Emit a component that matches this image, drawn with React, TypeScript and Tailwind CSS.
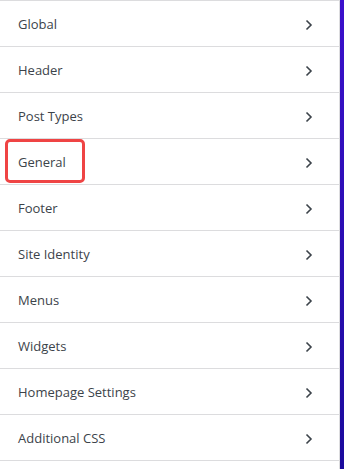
import React from "react";

const items = [
  "Global",
  "Header",
  "Post Types",
  "General",
  "Footer",
  "Site Identity",
  "Menus",
  "Widgets",
  "Homepage Settings",
  "Additional CSS",
];

function Chevron() {
  return (
    <svg width="10" height="12" viewBox="0 0 10 12" fill="none">
      <path d="M2.5 1.5 L7 6 L2.5 10.5" stroke="#3c434a" strokeWidth="1.6" />
    </svg>
  );
}

export default function App() {
  return (
    <div className="flex h-[469px] w-[344px] bg-white" style={{ fontFamily: '"Open Sans", "Noto Sans", sans-serif' }}>
      <div className="flex w-[340px] flex-col border-r border-[#dcdcde]">
        <div className="border-t border-[#dcdcde]" />
        {items.map((label) => (
          <div key={label} className="relative flex h-[46px] items-center justify-between border-b border-[#dcdcde] pl-[18px] pr-[25px] pt-[2px]">
            <span className="text-[13px] font-medium text-[#3c434a]">{label}</span>
            <Chevron />
            {label === "General" && (
              <div className="absolute left-[5px] top-0 h-[44px] w-[80px] rounded-[5px] border-[3px] border-[#ef4444]" />
            )}
          </div>
        ))}
      </div>
      <div className="h-full w-[4px] bg-gradient-to-b from-[#3b10cc] to-[#1a0a9c]" />
    </div>
  );
}
